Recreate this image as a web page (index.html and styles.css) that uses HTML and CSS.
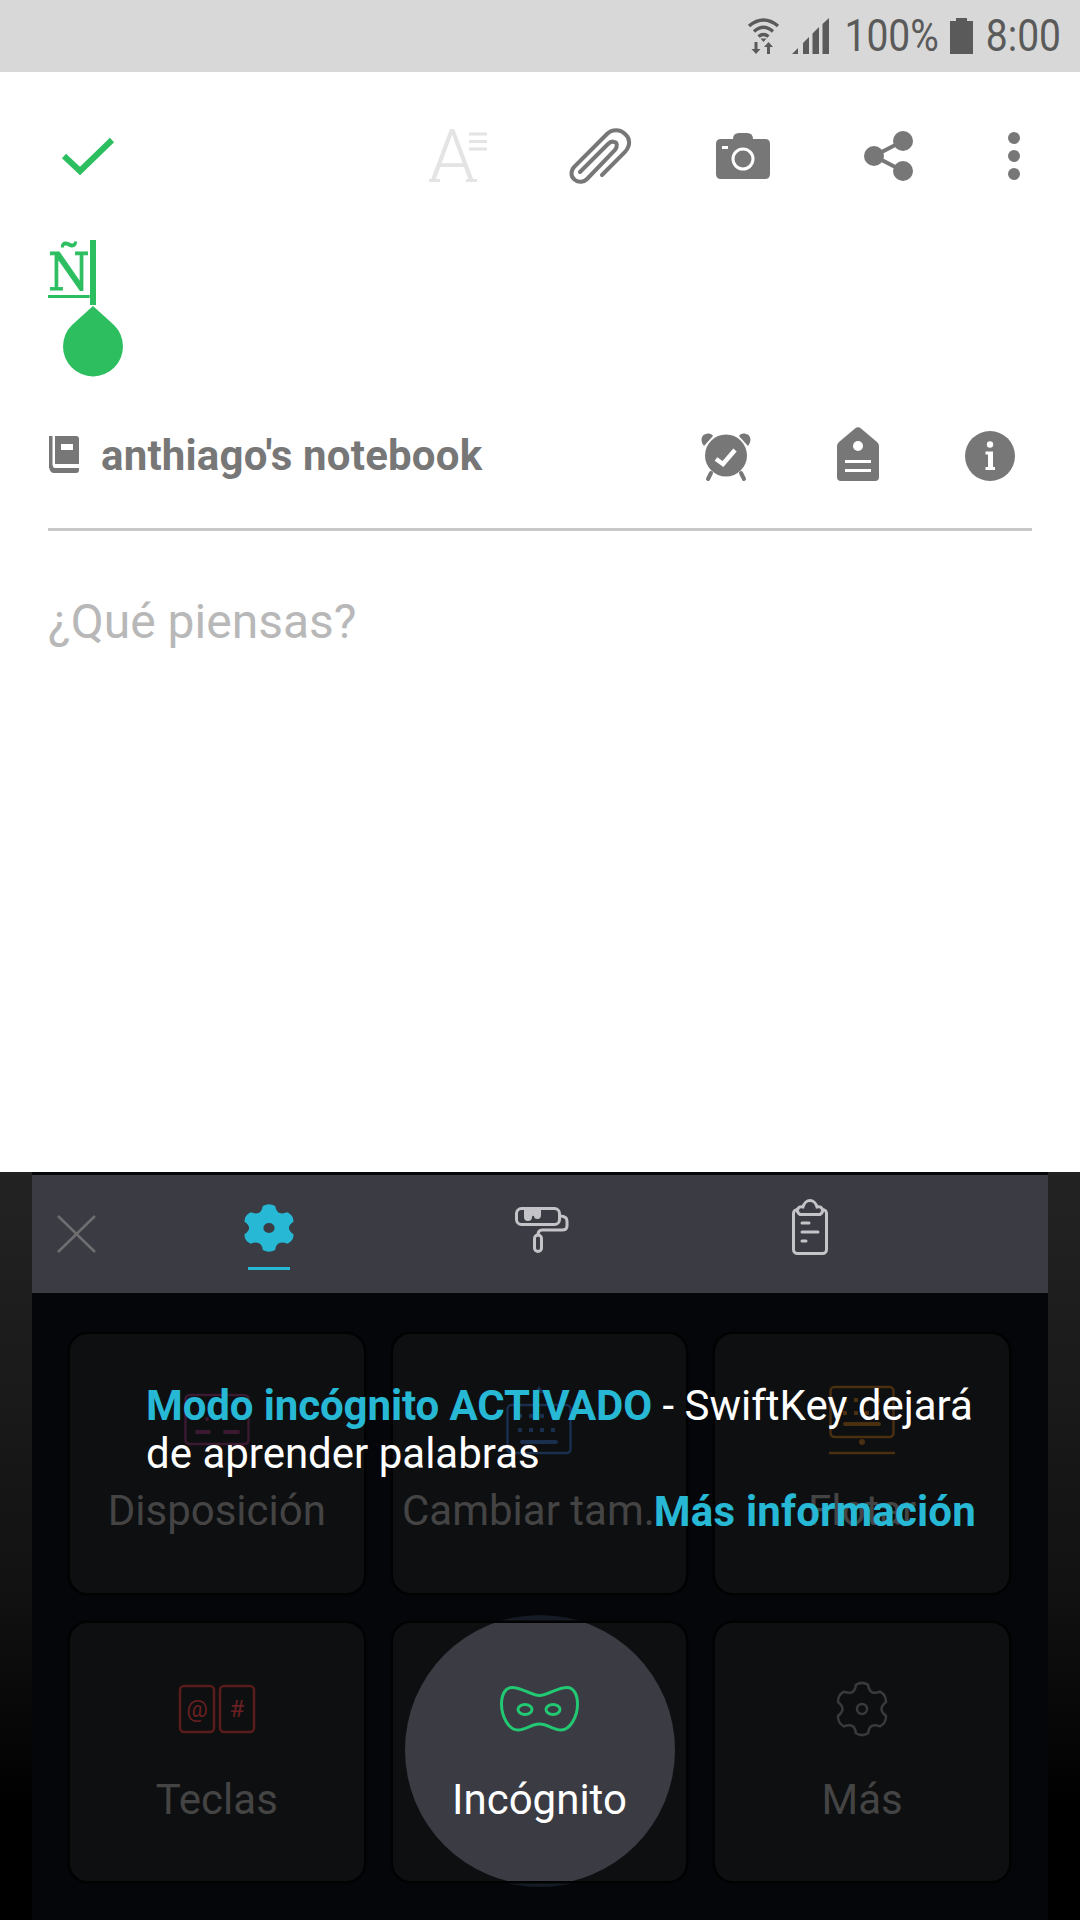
FILE: index.html
```html
<!DOCTYPE html>
<html lang="es">
<head>
<meta charset="utf-8">
<title>Nota</title>
<link rel="stylesheet" href="styles.css">
</head>
<body>
<div class="screen">
  <header class="status">
    <svg class="st-wifi" viewBox="0 0 32 37"><path class="st-line" d="M1 9Q15.5-3 30 9M6 14.500Q15.500 6 25 14.500M10.500 19.500Q15.500 15.500 20.500 19.500"/><path class="st-fill" d="M12.500 21.500h6L15.500 25zM6.500 25h3v7h3L8 37 3.500 32h3zM20.500 25l4.500 5h-3v7h-3v-7h-3z"/></svg>
    <svg class="st-signal" viewBox="0 0 37 36"><path class="st-fill" d="M0 36 6 30V36ZM11 36V25L17 19V36ZM20.500 36V15.500L27 9V36ZM30.500 36V6L37 0V36Z"/></svg>
    <span class="st-text st-pct">100%</span>
    <svg class="st-batt" viewBox="0 0 23 36"><path class="st-fill" d="M6 0H17V3H23V36H0V3H6Z"/></svg>
    <span class="st-text st-time">8:00</span>
  </header>

  <main class="editor">
    <div class="toolbar">
      <svg class="tool-check" viewBox="0 0 52 38"><path class="green-line" d="M2 19 18 34 50 3"/></svg>
      <svg class="tool-a" viewBox="0 0 58 53"><text class="a-glyph" x="0" y="53">A</text><path class="a-feet" d="M0 51.500H11M37 51.500H48"/><path class="a-lines" d="M40 5H58M40 12.500H58M40 20H58"/></svg>
      <svg class="tool-clip" viewBox="0 0 62 56"><path class="clip-line" d="M33 47 56 24C62 17 61 10 56 6 51 1 43 1 38 6L5 39C1 44 2 49 6 52 10 55 15 54 18 51L46 22C49 18 48 14 45 14 43 13 41 14 39 16L11 44"/></svg>
      <svg class="tool-cam" viewBox="0 0 54 46"><path class="grey-fill" d="M17 6Q17 0 23 0H31Q37 0 37 6H49Q54 6 54 11V41Q54 46 49 46H5Q0 46 0 41V11Q0 6 5 6Z"/><rect class="white-fill" x="6" y="13" width="6" height="3"/><circle class="cam-lens" cx="27" cy="26" r="10"/></svg>
      <svg class="tool-share" viewBox="0 0 49 50"><path class="share-line" d="M39 10 10 25 39 40"/><circle class="grey-fill" cx="10" cy="25" r="10"/><circle class="grey-fill" cx="39" cy="10" r="10"/><circle class="grey-fill" cx="39" cy="40" r="10"/></svg>
      <svg class="tool-dots" viewBox="0 0 12 48"><circle class="grey-fill" cx="6" cy="6" r="6"/><circle class="grey-fill" cx="6" cy="24" r="6"/><circle class="grey-fill" cx="6" cy="42" r="6"/></svg>
    </div>

    <div class="title">
      <span class="title-text">Ñ</span>
      <svg class="caret" viewBox="0 0 60 136"><rect class="green-fill" x="27" y="0" width="6" height="65"/><path class="green-fill" d="M30 66 51 85A30 30 0 1 1 9 85Z"/></svg>
    </div>

    <div class="meta">
      <svg class="meta-book" viewBox="0 0 30 37"><rect class="grey-fill" x="0" y="0" width="3.500" height="32"/><path class="grey-fill" d="M6 0H27Q30 0 30 3V28H6Z"/><rect class="white-fill" x="12" y="8" width="12" height="6"/><path class="grey-fill" d="M0 31Q1 37 5 37H27Q30 37 30 34V32H6Q4 32 3.500 29Z"/></svg>
      <span class="notebook">anthiago's notebook</span>
      <svg class="meta-alarm" viewBox="0 0 50 48"><circle class="grey-fill" cx="25" cy="22.500" r="21"/><path class="grey-fill" d="M3 13C-1 8 0 2 5 1 8 0 11 1 12 3ZM47 13C51 8 50 2 45 1 42 0 39 1 38 3Z"/><path class="alarm-foot" d="M10 40 7 46M40 40 43 46"/><path class="alarm-tick" d="M15 26 22 31 34 17"/></svg>
      <svg class="meta-tag" viewBox="0 0 42 54"><path class="grey-fill" d="M18 1.500Q21-1 24 1.500L40 15Q42 17 42 19V50Q42 54 38 54H4Q0 54 0 50V19Q0 17 2 15Z"/><ellipse class="white-fill" cx="21" cy="19" rx="5" ry="5"/><rect class="white-fill" x="8" y="33" width="26" height="3"/><rect class="white-fill" x="8" y="42" width="26" height="3"/></svg>
      <svg class="meta-info" viewBox="0 0 50 50"><circle class="grey-fill" cx="25" cy="25" r="25"/><circle class="white-fill" cx="25" cy="13.500" r="3.200"/><path class="white-fill" d="M20.500 20.500H28V36H30V39H20.500V36H23V23.500H20.500Z"/></svg>
    </div>

    <p class="placeholder">¿Qué piensas?</p>
  </main>

  <section class="keyboard">
    <div class="panel">
      <nav class="kb-tabs">
        <svg class="tab-close" viewBox="0 0 39 38"><path class="close-line" d="M1 1 38 37M38 1 1 37"/></svg>
        <div class="tab-active">
          <svg class="tab-gear" viewBox="-24.500 -26.500 49 53" preserveAspectRatio="none"><path class="cyan-fill" fill-rule="evenodd" d="M-6.050-24.250Q0-28 6.050-24.250Q7.500-13 17.980-17.370Q24.250-14 24.030-6.890Q15 0 24.030 6.890Q24.250 14 17.980 17.370Q7.500 13 6.050 24.250Q0 28-6.050 24.250Q-7.500 13-17.980 17.370Q-24.250 14-24.030 6.890Q-15 0-24.030-6.890Q-24.250-14-17.980-17.370Q-7.500-13-6.050-24.250ZM-5.500 0A5.500 5.500 0 1 0 5.500 0A5.500 5.500 0 1 0-5.500 0Z"/></svg>
          <span class="tab-bar"></span>
        </div>
        <svg class="tab-roller" viewBox="0 0 54 46"><rect class="pale-line" x="1.500" y="1.500" width="43" height="16" rx="5"/><path class="pale-line" d="M45 9Q52 9 52 14V19Q52 23 47 23H27Q23 23 23 28"/><rect class="pale-line" x="19.500" y="28" width="7" height="16.500" rx="3.500"/><path class="pale-fill" d="M9 3H26V8Q26 12 22.500 12T19 9Q17.500 8 17 10 17 14 13 14T9 10Z"/></svg>
        <svg class="tab-paste" viewBox="0 0 36 56"><rect class="pale-line" x="1.500" y="10.500" width="33" height="44" rx="4"/><path class="hump" d="M8 15.500C3 12 6 7 11 8 12 4 15 1.500 18 1.500 21 1.500 24 4 25 8 30 7 33 12 28 15.500Z"/><path class="pale-line" d="M10 24H17M10 33H26M10 42H14"/></svg>
      </nav>

      <div class="grid">
        <div class="card">
          <div class="card-icon"><svg class="ico" viewBox="0 0 66 80"><rect class="ln-purple" x="1.500" y="15" width="63" height="49" rx="4"/><path class="ln-purple dash" d="M13 52H25M41 52H54"/><circle class="fl-purple" cx="23" cy="39" r="2"/></svg></div>
          <span class="label">Disposición</span>
        </div>
        <div class="card">
          <div class="card-icon"><svg class="ico" viewBox="0 0 66 80"><rect class="ln-blue" x="1.500" y="25" width="63" height="48" rx="4"/><path class="fl-blue" d="M33 6 38 13H28Z"/><path class="ln-blue dots" d="M12 36H52M12 50H52"/><path class="ln-blue dash" d="M16 62H50"/></svg></div>
          <span class="label">Cambiar tam...</span>
        </div>
        <div class="card">
          <div class="card-icon"><svg class="ico" viewBox="0 0 66 80"><rect class="ln-orange" x="1.500" y="7" width="63" height="50" rx="4"/><path class="ln-orange dots" d="M14 20H52M14 33H52"/><path class="ln-orange dash" d="M16 44H50"/><circle class="fl-orange" cx="33" cy="62" r="3"/><path class="ln-orange" d="M0 73H66"/></svg></div>
          <span class="label">Flotar</span>
        </div>
        <div class="card">
          <div class="card-icon"><svg class="ico-keys" viewBox="0 0 76 48"><rect class="ln-red" x="1" y="1" width="34" height="46" rx="4"/><rect class="ln-red" x="41" y="1" width="34" height="46" rx="4"/><text class="key-glyph" x="18" y="32">@</text><text class="key-glyph" x="58" y="32">#</text></svg></div>
          <span class="label">Teclas</span>
        </div>
        <div class="cell">
          <span class="halo"></span>
          <div class="card card-on">
            <span class="disc"></span>
            <div class="card-icon"><svg class="ico-mask" viewBox="0 0 79 46"><path class="ln-green" d="M39.500 9.500C31 9.500 22 1.500 12 1.500 5 1.500 1.500 9 1.500 18 1.500 31 9 44 18 44 26 44 31 38 39.500 38 48 38 53 44 61 44 70 44 77.500 31 77.500 18 77.500 9 74 1.500 67 1.500 57 1.500 48 9.500 39.500 9.500Z"/><ellipse class="ln-green" cx="25" cy="23.500" rx="7" ry="5"/><ellipse class="ln-green" cx="53" cy="23.500" rx="7" ry="5"/></svg></div>
            <span class="label label-on">Incógnito</span>
          </div>
        </div>
        <div class="card">
          <div class="card-icon"><svg class="ico-gear" viewBox="-27 -27 54 54"><path class="ln-grey" d="M-6.050-24.250Q0-28 6.050-24.250Q7.500-13 17.980-17.370Q24.250-14 24.030-6.890Q15 0 24.030 6.890Q24.250 14 17.980 17.370Q7.500 13 6.050 24.250Q0 28-6.050 24.250Q-7.500 13-17.980 17.370Q-24.250 14-24.030 6.890Q-15 0-24.030-6.890Q-24.250-14-17.980-17.370Q-7.500-13-6.050-24.250Z"/><circle class="ln-grey" cx="0" cy="0" r="5"/></svg></div>
          <span class="label">Más</span>
        </div>
      </div>
    </div>

    <div class="toast">
      <p class="toast-text"><b class="accent">Modo incógnito ACTIVADO</b> - SwiftKey dejará de aprender palabras</p>
      <p class="toast-link">Más información</p>
    </div>
  </section>
</div>
</body>
</html>
```

FILE: styles.css
```css
* { box-sizing: border-box; }
html, body { margin: 0; padding: 0; }
body { background: #fff; font-family: Roboto, "Liberation Sans", sans-serif; }
svg { display: block; flex: none; overflow: visible; }
p { margin: 0; }

.screen { width: 1080px; height: 1920px; display: flex; flex-direction: column; overflow: hidden; }

/* status bar */
.status { height: 72px; flex: none; background: #d8d8d8; display: flex; align-items: flex-start; padding: 17px 19px 0 0; justify-content: flex-end; }
.st-line { fill: none; stroke: #5a5a5a; stroke-width: 3.4; }
.st-fill { fill: #5a5a5a; }
.st-wifi { width: 32px; height: 37px; }
.st-signal { width: 37px; height: 36px; margin: 1px 0 0 12px; }
.st-batt { width: 23px; height: 36px; margin: 1px 0 0 11px; }
.st-text { font-size: 39px; line-height: 38px; color: #5a5a5a; transform: scaleY(1.16); }
.st-pct { margin-left: 15px; }
.st-time { margin-left: 13px; }

/* editor */
.editor { flex: 1; background: #fff; min-height: 0; }
.toolbar { height: 167px; padding-left: 62px; display: flex; align-items: center; }
.tool-check { width: 52px; height: 38px; }
.tool-a { width: 58px; height: 53px; margin-left: 315px; }
.tool-clip { width: 62px; height: 56px; margin-left: 82px; }
.tool-cam { width: 54px; height: 46px; margin-left: 85px; }
.tool-share { width: 49px; height: 50px; margin-left: 94px; }
.tool-dots { width: 12px; height: 48px; margin-left: 95px; }

.green-line { fill: none; stroke: #2dbe60; stroke-width: 6; }
.green-fill { fill: #2dbe60; }
.grey-fill { fill: #777; }
.white-fill { fill: #fff; }
.a-glyph { font-family: Roboto, sans-serif; font-weight: 300; font-size: 74px; fill: #e4e4e4; }
.a-feet { fill: none; stroke: #e4e4e4; stroke-width: 3; }
.a-lines { fill: none; stroke: #e4e4e4; stroke-width: 3; }
.clip-line { fill: none; stroke: #777; stroke-width: 4; stroke-linecap: round; }
.cam-lens { fill: #777; stroke: #fff; stroke-width: 3; }
.share-line { fill: none; stroke: #777; stroke-width: 4; }

.title { position: relative; height: 161px; padding: 2px 0 0 48px; }
.title-text { font-family: "DejaVu Serif", serif; font-stretch: condensed; font-size: 53px; line-height: 62px; color: #2dbe60; -webkit-text-stroke: .8px #2dbe60; text-decoration: underline; text-decoration-thickness: 3px; text-underline-offset: 5px; display: inline-block; }
.caret { position: absolute; left: 63px; top: 1px; width: 60px; height: 136px; }

.meta { height: 131px; margin: 0 48px; padding: 33px 17px 0 1px; border-bottom: 3px solid #c8c8c8; display: flex; align-items: flex-start; }
.meta-book { width: 30px; height: 37px; margin-top: 3px; }
.notebook { font-size: 42px; line-height: 44px; font-weight: 700; letter-spacing: .2px; color: #777; margin: 1px 0 0 22px; width: 600px; white-space: nowrap; }
.meta-alarm { width: 50px; height: 48px; margin-top: 0; }
.meta-tag { width: 42px; height: 54px; margin: -6px 0 0 86px; }
.meta-info { width: 50px; height: 50px; margin: -2px 0 0 86px; }
.alarm-foot { fill: none; stroke: #777; stroke-width: 4; stroke-linecap: round; }
.alarm-tick { fill: none; stroke: #fff; stroke-width: 4.500; }

.placeholder { margin: 63px 0 0 48px; font-size: 48px; line-height: 56px; color: #b8b8b8; }

/* keyboard */
.keyboard { position: relative; height: 748px; flex: none; padding: 0 32px; background: linear-gradient(#232323 0, #111 57%, #000 85%); }
.panel { height: 100%; background: #05060a; padding-top: 3px; }
.kb-tabs { height: 118px; background: #3a3b43; display: flex; align-items: flex-start; }
.tab-close { width: 39px; height: 38px; margin: 40px 0 0 25px; }
.close-line { fill: none; stroke: #6e6e70; stroke-width: 2.500; }
.tab-active { display: flex; flex-direction: column; align-items: center; width: 50px; margin: 29px 0 0 148px; }
.tab-gear { width: 50px; height: 48px; }
.cyan-fill { fill: #26b8d4; }
.tab-bar { width: 42px; height: 3px; margin-top: 15px; background: #26b8d4; }
.tab-roller { width: 54px; height: 46px; margin: 32px 0 0 221px; }
.pale-line { fill: none; stroke: #c4c4c8; stroke-width: 3; stroke-linecap: round; }
.pale-fill { fill: #c4c4c8; }
.hump { fill: #3a3b43; stroke: #c4c4c8; stroke-width: 3; }
.tab-paste { width: 36px; height: 56px; margin: 24px 0 0 223px; }

.grid { display: grid; grid-template-columns: repeat(3, 1fr); grid-template-rows: 259px 258px; gap: 30px 29px; padding: 41px 39px 0 38px; }
.card { position: relative; overflow: hidden; display: flex; flex-direction: column; align-items: center; padding-top: 46px; background: #0e0f11; border-radius: 18px; box-shadow: 0 0 0 2.500px #020203; }
.cell { position: relative; display: flex; }
.cell .card { flex: 1; }
.halo { position: absolute; left: 11px; top: -8px; width: 272px; height: 272px; border-radius: 50%; background: #141b24; }
.card-on { z-index: 1; }
.disc { position: absolute; left: 12px; top: -8px; width: 270px; height: 270px; border-radius: 50%; background: #3a3b43; }
.card-icon { position: relative; height: 80px; margin-bottom: 26px; display: flex; align-items: center; justify-content: center; }
.ico { width: 66px; height: 80px; }
.ico-keys { width: 76px; height: 48px; }
.ico-mask { width: 79px; height: 46px; }
.ico-gear { width: 54px; height: 54px; }
.label { position: relative; font-size: 42px; line-height: 50px; color: #444; white-space: nowrap; }
.label-on { color: #fff; }

.ln-purple { fill: none; stroke: #3a1a30; stroke-width: 2.500; }
.fl-purple { fill: #3a1a30; }
.ln-blue { fill: none; stroke: #1a2e4e; stroke-width: 2.500; }
.fl-blue { fill: #1a2e4e; }
.ln-orange { fill: none; stroke: #4a2f10; stroke-width: 2.500; }
.fl-orange { fill: #4a2f10; }
.dash { stroke-width: 4; stroke-linecap: round; }
.dots { stroke-width: 4; stroke-dasharray: 4 7; }
.ln-red { fill: none; stroke: #5a1c1c; stroke-width: 2.500; }
.key-glyph { font-family: Roboto, sans-serif; font-size: 24px; text-anchor: middle; fill: #6a2020; }
.ln-green { fill: none; stroke: #22c872; stroke-width: 3; }
.ln-grey { fill: none; stroke: #3a3a3a; stroke-width: 2.500; }

.toast { position: absolute; left: 146px; top: 210px; width: 830px; font-size: 42px; line-height: 48px; color: #fff; }
.accent { font-weight: 700; color: #26b8d4; letter-spacing: -.1px; }
.toast-link { margin-top: 10px; font-weight: 700; color: #26b8d4; text-align: right; letter-spacing: .2px; }
```
